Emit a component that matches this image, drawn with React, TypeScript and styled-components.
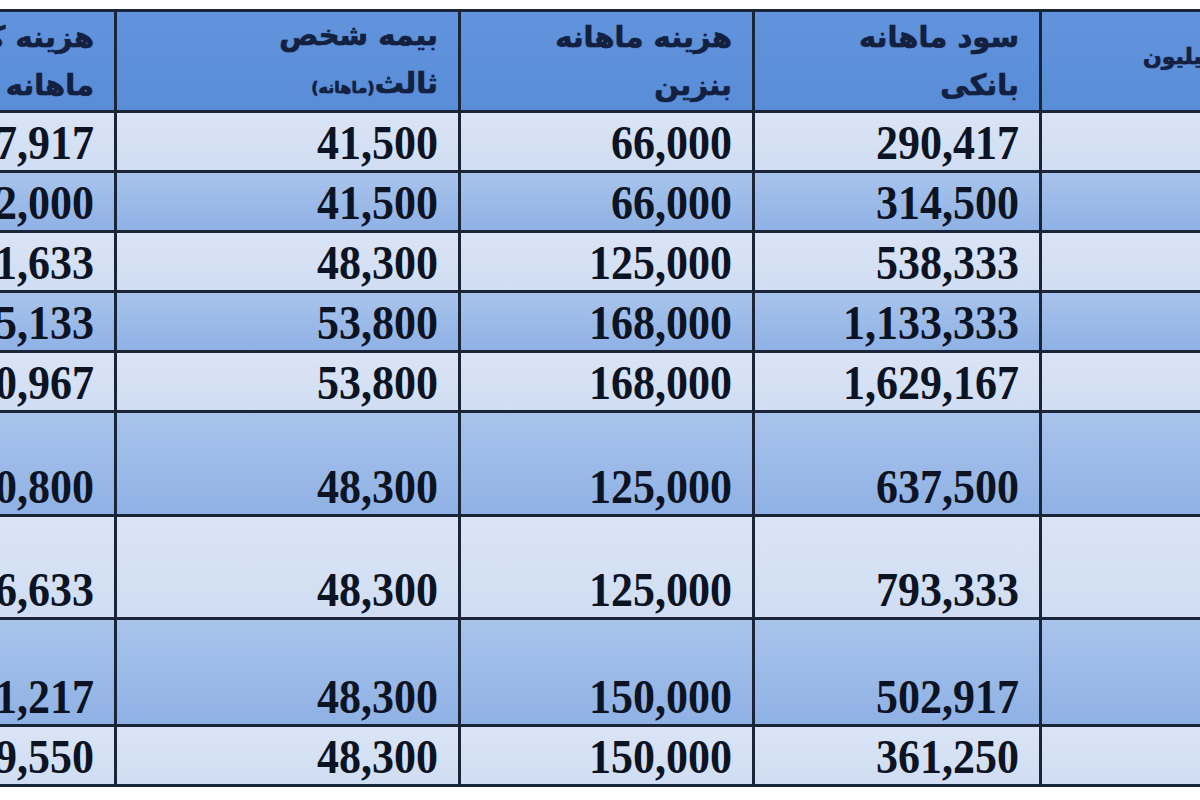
import { Fragment } from "react"
import styled, { createGlobalStyle } from "styled-components"

const GlobalStyle = createGlobalStyle`
  html, body {
    margin: 0;
    padding: 0;
    background: #ffffff;
    overflow: hidden;
  }
`

const Page = styled.div`
  width: 1200px;
  height: 800px;
  overflow: hidden;
  padding-top: 9px;
  box-sizing: border-box;
  background: #ffffff;
`

const Sheet = styled.div`
  display: grid;
  width: max-content;
  margin-left: -200px;
  grid-template-columns: 314px 341px 291px 284px 260px;
  grid-template-rows: 98px repeat(5, 57px) 101px 100px 104px 57px;
  column-gap: 3px;
  row-gap: 3px;
  padding: 3px 0;
  background: #1b2538;
`

const HeadCell = styled.div<{ $note?: boolean }>`
  direction: rtl;
  display: flex;
  flex-direction: column;
  justify-content: center;
  align-items: ${(p) => (p.$note ? "flex-end" : "flex-start")};
  padding: ${(p) => (p.$note ? "0 0 8px 101px" : "0 20px 0 0")};
  background: linear-gradient(180deg, #6194dc 0%, #5a8dd8 100%);
  color: #13203f;
  font-family: "DejaVu Sans", sans-serif;
  font-weight: bold;
  font-size: ${(p) => (p.$note ? "22px" : "29px")};
  line-height: 48px;
  white-space: nowrap;
  -webkit-text-stroke: 0.5px #13203f;
  text-shadow: 0 0 1px rgba(20, 32, 70, 0.6);
`

const HeadLine = styled.span`
  display: block;
`

const Small = styled.span`
  font-size: 16px;
`

const Cell = styled.div<{ $dark: boolean }>`
  display: flex;
  align-items: flex-end;
  justify-content: flex-end;
  padding: 0 20px 3px 0;
  background: ${(p) =>
    p.$dark
      ? "linear-gradient(180deg, #a8c4ec 0%, #8fb1e4 100%)"
      : "linear-gradient(180deg, #dae4f6 0%, #d0ddf2 100%)"};
`

const Amount = styled.span`
  display: block;
  font-family: "Liberation Serif", "Times New Roman", serif;
  font-weight: bold;
  font-size: 44px;
  line-height: 44px;
  color: #0c1424;
  white-space: nowrap;
  transform: scaleY(1.08);
  transform-origin: 50% 85%;
`

const rows = [
  ["397,917", "41,500", "66,000", "290,417"],
  ["422,000", "41,500", "66,000", "314,500"],
  ["711,633", "48,300", "125,000", "538,333"],
  ["1,355,133", "53,800", "168,000", "1,133,333"],
  ["1,850,967", "53,800", "168,000", "1,629,167"],
  ["810,800", "48,300", "125,000", "637,500"],
  ["966,633", "48,300", "125,000", "793,333"],
  ["701,217", "48,300", "150,000", "502,917"],
  ["559,550", "48,300", "150,000", "361,250"],
]

export default function App() {
  return (
    <>
      <GlobalStyle />
      <Page>
        <Sheet>
          <HeadCell>
            <HeadLine>هزینه کل</HeadLine>
            <HeadLine>ماهانه</HeadLine>
          </HeadCell>
          <HeadCell>
            <HeadLine>بیمه شخص</HeadLine>
            <HeadLine>
              ثالث<Small>(ماهانه)</Small>
            </HeadLine>
          </HeadCell>
          <HeadCell>
            <HeadLine>هزینه ماهانه</HeadLine>
            <HeadLine>بنزین</HeadLine>
          </HeadCell>
          <HeadCell>
            <HeadLine>سود ماهانه</HeadLine>
            <HeadLine>بانکی</HeadLine>
          </HeadCell>
          <HeadCell $note>
            <HeadLine>قیمت به میلیون</HeadLine>
          </HeadCell>
          {rows.map((row, i) => (
            <Fragment key={i}>
              {row.map((value, j) => (
                <Cell key={j} $dark={i % 2 === 1}>
                  <Amount>{value}</Amount>
                </Cell>
              ))}
              <Cell $dark={i % 2 === 1} />
            </Fragment>
          ))}
        </Sheet>
      </Page>
    </>
  )
}
